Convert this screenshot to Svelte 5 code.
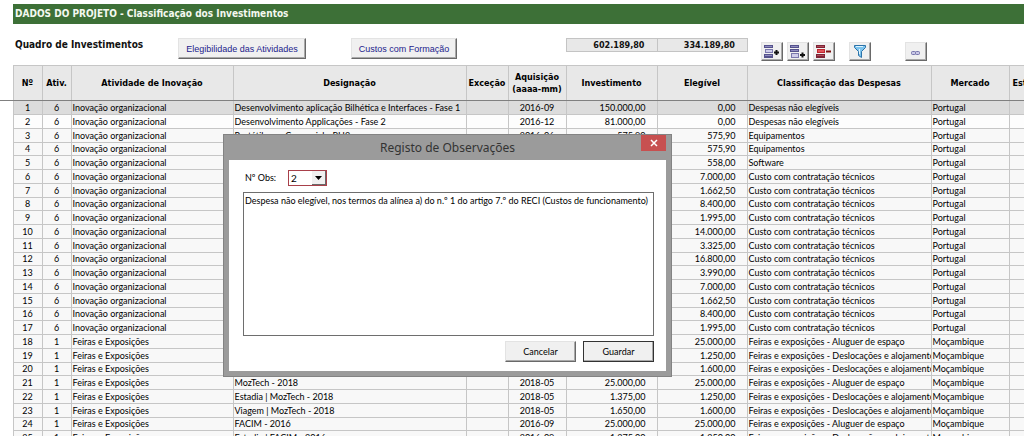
<script>
  import { onMount } from 'svelte';

  const columns = [
    { label: 'Nº', kind: 'num' },
    { label: 'Ativ.', kind: 'act' },
    { label: 'Atividade de Inovação', kind: 'activity' },
    { label: 'Designação', kind: 'name' },
    { label: 'Exceção', kind: 'exception' },
    { label: 'Aquisição (aaaa-mm)', kind: 'date' },
    { label: 'Investimento', kind: 'invest' },
    { label: 'Elegível', kind: 'eligible' },
    { label: 'Classificação das Despesas', kind: 'expense' },
    { label: 'Mercado', kind: 'market' },
    { label: 'Est.', kind: 'state' },
  ];

  const org = 'Inovação organizacional';
  const fairs = 'Feiras e Exposições';
  const tech = 'Custo com contratação técnicos';
  const space = 'Feiras e exposições - Aluguer de espaço';
  const travel = 'Feiras e exposições - Deslocações e alojamento';

  const entries = [
    [6, org, 'Desenvolvimento aplicação Bilhética e Interfaces - Fase 1', '2016-09', '150.000,00', '0,00', 'Despesas não elegíveis', 'Portugal'],
    [6, org, 'Desenvolvimento Applicações - Fase 2', '2016-12', '81.000,00', '0,00', 'Despesas não elegíveis', 'Portugal'],
    [6, org, 'Portátil para Comercial - RH2', '2016-06', '575,90', '575,90', 'Equipamentos', 'Portugal'],
    [6, org, '', '', '', '575,90', 'Equipamentos', 'Portugal'],
    [6, org, '', '', '', '558,00', 'Software', 'Portugal'],
    [6, org, '', '', '', '7.000,00', tech, 'Portugal'],
    [6, org, '', '', '', '1.662,50', tech, 'Portugal'],
    [6, org, '', '', '', '8.400,00', tech, 'Portugal'],
    [6, org, '', '', '', '1.995,00', tech, 'Portugal'],
    [6, org, '', '', '', '14.000,00', tech, 'Portugal'],
    [6, org, '', '', '', '3.325,00', tech, 'Portugal'],
    [6, org, '', '', '', '16.800,00', tech, 'Portugal'],
    [6, org, '', '', '', '3.990,00', tech, 'Portugal'],
    [6, org, '', '', '', '7.000,00', tech, 'Portugal'],
    [6, org, '', '', '', '1.662,50', tech, 'Portugal'],
    [6, org, '', '', '', '8.400,00', tech, 'Portugal'],
    [6, org, '', '', '', '1.995,00', tech, 'Portugal'],
    [1, fairs, '', '', '', '25.000,00', space, 'Moçambique'],
    [1, fairs, '', '', '', '1.250,00', travel, 'Moçambique'],
    [1, fairs, '', '', '', '1.600,00', travel, 'Moçambique'],
    [1, fairs, 'MozTech - 2018', '2018-05', '25.000,00', '25.000,00', space, 'Moçambique'],
    [1, fairs, 'Estadia | MozTech - 2018', '2018-05', '1.375,00', '1.250,00', travel, 'Moçambique'],
    [1, fairs, 'Viagem | MozTech - 2018', '2018-05', '1.650,00', '1.600,00', travel, 'Moçambique'],
    [1, fairs, 'FACIM - 2016', '2016-09', '25.000,00', '25.000,00', space, 'Moçambique'],
    [1, fairs, 'Estadia | FACIM - 2016', '2016-09', '1.375,00', '1.250,00', travel, 'Moçambique'],
  ];

  let open = $state(true);
  let obs = $state('2');
  let text = $state('Despesa não elegível, nos termos da alínea a) do n.º 1 do artigo 7.º do RECI (Custos de funcionamento)');
  let note = $state();

  const close = () => (open = false);

  onMount(() => {
    note.focus();
    note.setSelectionRange(text.length, text.length);
  });
</script>

<main class="sheet">
  <h1>DADOS DO PROJETO - Classificação dos Investimentos</h1>

  <div class="toolbar">
    <h2>Quadro de Investimentos</h2>
    <div class="links">
      <button class="raised link-btn">Elegibilidade das Atividades</button>
      <button class="raised link-btn short">Custos com Formação</button>
    </div>
    <div class="totals">
      <output>602.189,80</output>
      <output>334.189,80</output>
    </div>
    <div class="tools">
      <button class="raised tool" aria-label="Inserir linha">
        <svg viewBox="0 0 20 17" width="20" height="17">
          <path d="M2 2h9v3h-9zM2 11h9v4h-9z" fill="#55528c" />
          <path d="M3 3h7v1h-7zM3 12h7v1h-7z" fill="#8e8bc0" />
          <rect x="3.5" y="6.5" width="7" height="3" fill="#cfcdea" stroke="#7b78ad" />
          <path d="M12 9.500h5M14.500 7v5" stroke="#111" stroke-width="2" />
        </svg>
      </button>
      <button class="raised tool" aria-label="Acrescentar linha">
        <svg viewBox="0 0 20 17" width="20" height="17">
          <path d="M2 2h9v3h-9zM2 6h9v3h-9z" fill="#55528c" />
          <path d="M3 3h7v1h-7zM3 7h7v1h-7z" fill="#8e8bc0" />
          <rect x="3.5" y="10.5" width="7" height="4" fill="#cfcdea" stroke="#7b78ad" />
          <path d="M12 12h5M14.500 9.500v5" stroke="#111" stroke-width="2" />
        </svg>
      </button>
      <button class="raised tool" aria-label="Eliminar linha">
        <svg viewBox="0 0 20 17" width="20" height="17">
          <path d="M2 2h9v3h-9zM2 11h9v4h-9z" fill="#7d2436" />
          <path d="M3 3h7v1h-7zM3 12h7v1h-7z" fill="#b04a58" />
          <rect x="3.5" y="6.5" width="7" height="3" fill="#e2545a" stroke="#c02830" />
          <path d="M12 8.500h5" stroke="#7a1010" stroke-width="2" />
        </svg>
      </button>
      <button class="raised tool filter" aria-label="Filtrar">
        <svg viewBox="0 0 20 17" width="20" height="17">
          <path d="M4.500 2.500h11v2l-4 4v6l-3-2v-4l-4-4z" fill="#7cc4ee" stroke="#2b72a8" />
          <path d="M6 3.500h7M9.500 6v5" stroke="#e0f4ff" />
        </svg>
      </button>
      <button class="raised tool unlink" aria-label="Ligação">
        <svg viewBox="0 0 20 17" width="20" height="17" fill="#c9c8e6" stroke="#7573ab">
          <rect x="5.500" y="8.500" width="4" height="3" rx="1" />
          <rect x="9.500" y="8.500" width="4" height="3" rx="1" />
        </svg>
      </button>
    </div>
  </div>

  <table>
    <colgroup>
      <col class="c-gutter" />
      {#each columns as col}
        <col class="c-{col.kind}" />
      {/each}
    </colgroup>
    <thead>
      <tr>
        <td class="gutter"></td>
        {#each columns as col}
          <th scope="col" class={col.kind}>{col.label}</th>
        {/each}
      </tr>
    </thead>
    <tbody>
      {#each entries as [act, activity, name, date, invest, eligible, expense, market], i}
        <tr>
          <td class="gutter"></td>
          <td class="mid">{i + 1}</td>
          <td class="mid">{act}</td>
          <td>{activity}</td>
          <td>{name}</td>
          <td></td>
          <td class="mid">{date}</td>
          <td class="money">{invest}</td>
          <td class="money">{eligible}</td>
          <td>{expense}</td>
          <td>{market}</td>
          <td></td>
        </tr>
      {/each}
    </tbody>
  </table>

  {#if open}
    <div class="dialog" role="dialog" aria-labelledby="dlg-title">
      <header>
        <h3 id="dlg-title">Registo de Observações</h3>
        <button class="close" aria-label="Fechar" onclick={close}>
          <svg viewBox="0 0 8 8" width="8" height="8">
            <path d="M1 1l6 6M7 1l-6 6" stroke="#fff" stroke-width="1.500" />
          </svg>
        </button>
      </header>
      <form onsubmit={(e) => e.preventDefault()}>
        <div class="field">
          <label for="obs">Nº Obs:</label>
          <div class="combo">
            <select id="obs" bind:value={obs}>
              <option>1</option>
              <option>2</option>
              <option>3</option>
            </select>
            <span class="arrow">
              <svg viewBox="0 0 7 4" width="7" height="4"><path d="M0 0h7l-3.500 4z" /></svg>
            </span>
          </div>
        </div>
        <textarea aria-label="Observação" spellcheck="false" bind:value={text} bind:this={note}></textarea>
        <div class="actions">
          <button type="button" class="raised" onclick={close}>Cancelar</button>
          <button class="raised default">Guardar</button>
        </div>
      </form>
    </div>
  {/if}
</main>

<style>
  :global(html) {
    overflow: hidden;
  }

  :global(body) {
    margin: 0;
    background: #fff;
  }

  .sheet {
    position: relative;
    overflow: hidden;
    height: 100vh;
    font: 9px/12px Lato, "Open Sans", sans-serif;
    color: #000;
  }

  h1,
  h2,
  h3 {
    margin: 0;
  }

  h1,
  h2,
  th,
  output {
    font-family: "DejaVu Sans Condensed", "DejaVu Sans", sans-serif;
    font-weight: bold;
  }

  h1 {
    margin: 4px 0 0 13px;
    padding-left: 2px;
    background: #3d7037;
    color: #f4f8f0;
    font-size: 10px;
    line-height: 20px;
  }

  button {
    font: inherit;
    color: inherit;
    padding: 0;
  }

  .raised {
    background: #f0f0f0;
    border: 1px solid;
    border-color: #e3e3e3 #696969 #696969 #e3e3e3;
    box-shadow: inset -1px -1px #a9a9a9;
  }

  .toolbar {
    display: flex;
    align-items: flex-start;
    height: 27px;
    padding: 14px 0 0 15px;
  }

  h2 {
    width: 163px;
    font-size: 10px;
    line-height: 14px;
    color: #111;
  }

  .links {
    display: flex;
    gap: 45px;
    width: 388px;
  }

  .link-btn {
    width: 128px;
    height: 21px;
    font-family: "Liberation Sans", Arial, sans-serif;
    color: #1c1c8c;
  }

  .short {
    width: 106px;
  }

  .totals {
    display: flex;
    width: 182px;
    box-sizing: border-box;
    border: 1px solid #c4c4c4;
    background: #e8e8e8;
  }

  output {
    flex: 1;
    padding-right: 12px;
    text-align: right;
    color: #111;
  }

  output + output {
    border-left: 1px solid #c4c4c4;
  }

  .tools {
    display: flex;
    gap: 4px;
    margin: 4px 0 0 13px;
  }

  .tool {
    display: flex;
    align-items: center;
    justify-content: center;
    width: 22px;
    height: 19px;
  }

  .filter {
    margin-left: 10px;
  }

  .unlink {
    margin-left: 30px;
  }

  table {
    width: 1060px;
    table-layout: fixed;
    border-collapse: collapse;
  }

  .c-gutter { width: 13px; }
  .c-num { width: 29px; }
  .c-act { width: 29px; }
  .c-activity { width: 162px; }
  .c-name { width: 233px; }
  .c-exception { width: 42px; }
  .c-date { width: 58px; }
  .c-invest { width: 91px; }
  .c-eligible { width: 90px; }
  .c-expense { width: 184px; }
  .c-market { width: 78px; }

  th,
  td {
    box-sizing: border-box;
    padding: 0 1px;
    border: 1px solid #c6c6c6;
    white-space: nowrap;
    overflow: hidden;
  }

  th {
    height: 35px;
    background: #e8e8e8;
    border-bottom-color: #808080;
  }

  .date {
    white-space: normal;
  }

  .state {
    text-align: left;
    padding-left: 3px;
  }

  td {
    height: 14px;
    background: #f8f8f8;
    text-align: left;
  }

  tr:nth-child(4n) td {
    height: 13px;
  }

  tbody tr:first-child td {
    background: #dcdcdc;
    border-top-color: #808080;
  }

  tbody tr:nth-child(2) td {
    background: #fdfdfd;
  }

  .mid {
    text-align: center;
  }

  .money {
    text-align: right;
    padding-right: 11px;
  }

  table tr td.gutter {
    padding: 0;
    background: #fff;
    border-left: 0;
    border-top: 0;
    border-bottom: 0;
  }

  thead tr td.gutter {
    border-bottom: 1px solid #808080;
  }

  tbody tr:first-child td.gutter {
    background: #fff;
  }

  .dialog {
    position: absolute;
    left: 223px;
    top: 134px;
    box-sizing: border-box;
    width: 449px;
    padding: 0 5px 5px;
    border: 1px solid #838383;
    background: #9b9b9b;
  }

  .dialog header {
    display: grid;
    grid-template-columns: 25px 1fr 25px;
    align-items: start;
    height: 25px;
  }

  h3 {
    grid-column: 2;
    text-align: center;
    font: 12px/25px "Noto Sans", "Open Sans", sans-serif;
    color: #333;
  }

  .close {
    display: flex;
    align-items: center;
    justify-content: center;
    height: 16px;
    border: 0;
    background: #c75050;
  }

  form {
    padding: 10px 12px 9px 14px;
    background: #fff;
  }

  .field {
    display: flex;
    align-items: center;
  }

  .field label {
    width: 43px;
    padding-left: 2px;
  }

  .combo {
    display: flex;
    box-sizing: border-box;
    width: 39px;
    height: 16px;
    border: 1px solid #a8404a;
  }

  select {
    flex: 1;
    appearance: none;
    padding: 0 2px;
    border: 0;
    background: #fff;
    font: inherit;
    font-size: 10px;
    color: inherit;
  }

  .arrow {
    display: flex;
    align-items: center;
    justify-content: center;
    width: 13px;
    background: #f0f0f0;
    border-right: 1px solid #696969;
    border-bottom: 1px solid #696969;
    pointer-events: none;
  }

  textarea {
    display: block;
    box-sizing: border-box;
    width: 100%;
    height: 144px;
    margin: 6px 0 5px;
    padding: 2px 1px;
    border: 1px solid #6e6e6e;
    border-radius: 0;
    outline: 0;
    resize: none;
    overflow: hidden;
    font: inherit;
    color: inherit;
  }

  .actions {
    display: flex;
    justify-content: flex-end;
    gap: 7px;
  }

  .actions button {
    width: 71px;
    height: 21px;
  }

  .actions .default {
    border-color: #333;
  }
</style>
